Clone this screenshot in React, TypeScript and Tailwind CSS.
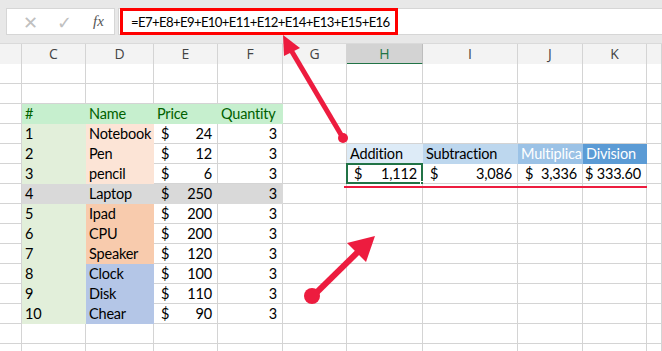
import React from "react";

type CellSpec = {
  text?: string;
  bg?: string;
  color?: string;
  align?: "left" | "right";
  money?: string;
  selected?: boolean;
};

// column widths B..L
const COLS = [22, 64, 68, 64, 65, 64, 76, 95, 65, 64, 15];
const HEADS = ["", "C", "D", "E", "F", "G", "H", "I", "J", "K", ""];

const GREEN = "#e2efda";
const HEAD_GREEN = "#c6efce";
const PEACH = "#fce4d6";
const ORANGE = "#f8cbad";
const BLUE = "#b4c6e7";
const GRAY = "#d9d9d9";

const items = [
  { n: "1", name: "Notebook", price: "24", bg: PEACH },
  { n: "2", name: "Pen", price: "12", bg: PEACH },
  { n: "3", name: "pencil", price: "6", bg: PEACH },
  { n: "4", name: "Laptop", price: "250", bg: GRAY },
  { n: "5", name: "Ipad", price: "200", bg: ORANGE },
  { n: "6", name: "CPU", price: "200", bg: ORANGE },
  { n: "7", name: "Speaker", price: "120", bg: ORANGE },
  { n: "8", name: "Clock", price: "100", bg: BLUE },
  { n: "9", name: "Disk", price: "110", bg: BLUE },
  { n: "10", name: "Chear", price: "90", bg: BLUE },
];

const blank = (): CellSpec[] => COLS.map(() => ({}));

const buildRows = (): CellSpec[][] => {
  const rows: CellSpec[][] = [blank(), blank()];
  const head = blank();
  head[1] = { text: "#", bg: HEAD_GREEN, color: "#006100" };
  head[2] = { text: "Name", bg: HEAD_GREEN, color: "#006100" };
  head[3] = { text: "Price", bg: HEAD_GREEN, color: "#006100" };
  head[4] = { text: "Quantity", bg: HEAD_GREEN, color: "#006100" };
  rows.push(head);

  items.forEach((it, i) => {
    const r = blank();
    const isGray = it.bg === GRAY;
    r[1] = { text: it.n, bg: isGray ? GRAY : GREEN };
    r[2] = { text: it.name, bg: it.bg };
    r[3] = { money: it.price, bg: isGray ? GRAY : undefined };
    r[4] = { text: "3", align: "right", bg: isGray ? GRAY : undefined };
    if (i === 1) {
      r[6] = { text: "Addition", bg: "#ddebf7" };
      r[7] = { text: "Subtraction", bg: "#bdd7ee" };
      r[8] = { text: "Multiplication", bg: "#9bc2e6", color: "#ffffff" };
      r[9] = { text: "Division", bg: "#5b9bd5", color: "#ffffff" };
    }
    if (i === 2) {
      r[6] = { money: "1,112", selected: true };
      r[7] = { money: "3,086" };
      r[8] = { money: "3,336" };
      r[9] = { text: "$ 333.60", align: "right" };
    }
    rows.push(r);
  });
  rows.push(blank(), blank());
  return rows;
};

const Cell = ({ c, w }: { c: CellSpec; w: number }) => {
  const bg = c.bg ?? "#ffffff";
  const line = c.bg ?? "#d4d4d4";
  return (
    <div
      className="relative h-5 shrink-0 border-r border-b whitespace-nowrap text-[14.5px] tracking-[-0.2px] leading-[19px]"
      style={{ width: w, backgroundColor: bg, borderColor: line, color: c.color ?? "#000" }}
    >
      {c.money ? (
        <div className="flex justify-between pl-[7px] pr-[5px]">
          <span>$</span>
          <span>{c.money}</span>
        </div>
      ) : (
        <div className={`overflow-hidden ${c.align === "right" ? "text-right pr-[5px]" : "pl-[3px]"}`}>{c.text}</div>
      )}
      {c.selected && (
        <div className="absolute -left-px -top-px w-[77px] h-[21px] border-2 border-[#217346]">
          <div className="absolute -right-[4px] -bottom-[4px] w-[5px] h-[5px] bg-[#217346] border border-white" />
        </div>
      )}
    </div>
  );
};

export default function App() {
  const rows = buildRows();
  return (
    <div className="relative w-[662px] h-[351px] overflow-hidden bg-white font-['Lato',sans-serif]">
      {/* formula bar */}
      <div className="flex h-[43px] bg-[#e8e8e8] pt-2 pl-[6px]">
        <div className="flex items-center w-[109px] h-[27px] bg-white border border-[#d6d6d6] text-[#c0c0c0]">
          <span className="ml-[16px] text-[18px] leading-none">✕</span>
          <span className="ml-[19px] text-[18px] leading-none">✓</span>
          <span className="ml-[21px] text-[15px] italic text-[#555] font-['Liberation_Serif',serif]">fx</span>
        </div>
        <div className="flex-1 h-[27px] ml-[3px] bg-white border-y border-l border-[#d6d6d6]">
          <div className="w-[278px] h-[27px] -mt-px ml-[1px] border-[3px] border-[#ff0000] pl-[8px] text-[13.2px] tracking-[-0.65px] leading-[22px] text-black whitespace-nowrap">
            =E7+E8+E9+E10+E11+E12+E14+E13+E15+E16
          </div>
        </div>
      </div>

      {/* column headers */}
      <div className="flex h-[21px] bg-[#f3f3f3] border-t border-[#dadada]">
        {COLS.map((w, i) => (
          <div
            key={i}
            className={`shrink-0 h-[21px] border-r border-b text-center text-[14px] leading-[19px] font-['Open_Sans',sans-serif] ${
              i === 6 ? "bg-[#d3d3d3] border-b-2 border-b-[#217346] border-r-[#bdbdbd] text-[#217346]" : "border-[#d4d4d4] text-[#444]"
            }`}
            style={{ width: w }}
          >
            {HEADS[i]}
          </div>
        ))}
      </div>

      {/* cells */}
      {rows.map((r, ri) => (
        <div key={ri} className="flex">
          {r.map((c, ci) => (
            <Cell key={ci} c={c} w={COLS[ci]} />
          ))}
        </div>
      ))}

      {/* annotations */}
      <svg className="absolute inset-0 pointer-events-none" width="662" height="351">
        <line x1="344" y1="187" x2="647" y2="187" stroke="#ed1c3f" strokeWidth="2" />
        <line x1="343" y1="138" x2="288" y2="45" stroke="#ed1c3f" strokeWidth="5" />
        <polygon points="283,35 300,48 284,56" fill="#ed1c3f" />
        <circle cx="343" cy="138" r="5" fill="#ed1c3f" />
        <line x1="312" y1="297" x2="364" y2="246" stroke="#ed1c3f" strokeWidth="6" />
        <polygon points="375,236 347,243 366,262" fill="#ed1c3f" />
        <circle cx="312" cy="296" r="8" fill="#ed1c3f" />
      </svg>
    </div>
  );
}
